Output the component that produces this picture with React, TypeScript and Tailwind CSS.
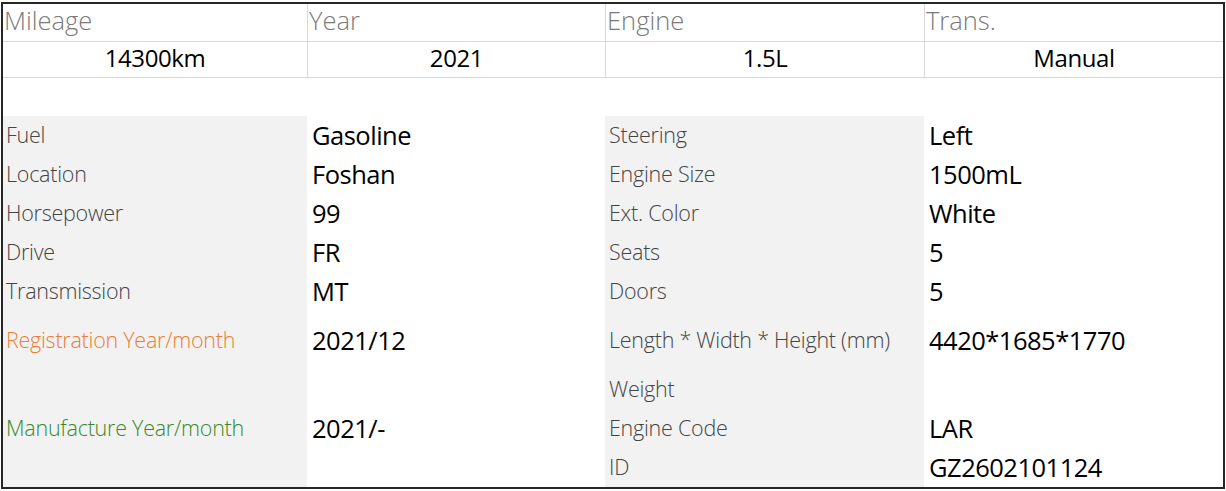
import React from 'react';

const font = { fontFamily: '"Open Sans", "Noto Sans", sans-serif' };

type Row = { label: string; value: string; h: string };

const topCols = [
  { head: 'Mileage', value: '14300km' },
  { head: 'Year', value: '2021' },
  { head: 'Engine', value: '1.5L' },
  { head: 'Trans.', value: 'Manual' },
];

const leftRows: Row[] = [
  { label: 'Fuel', value: 'Gasoline', h: 'h-[39px]' },
  { label: 'Location', value: 'Foshan', h: 'h-[39px]' },
  { label: 'Horsepower', value: '99', h: 'h-[39px]' },
  { label: 'Drive', value: 'FR', h: 'h-[39px]' },
  { label: 'Transmission', value: 'MT', h: 'h-[39px]' },
];

const rightRows: Row[] = [
  { label: 'Steering', value: 'Left', h: 'h-[39px]' },
  { label: 'Engine Size', value: '1500mL', h: 'h-[39px]' },
  { label: 'Ext. Color', value: 'White', h: 'h-[39px]' },
  { label: 'Seats', value: '5', h: 'h-[39px]' },
  { label: 'Doors', value: '5', h: 'h-[39px]' },
  { label: 'Length * Width * Height (mm)', value: '4420*1685*1770', h: 'h-[59px]' },
  { label: 'Weight', value: '', h: 'h-[39px]' },
  { label: 'Engine Code', value: 'LAR', h: 'h-[39px]' },
  { label: 'ID', value: 'GZ2602101124', h: 'h-[39px]' },
];

const Label = ({ children, color = 'text-[#444444]' }: { children: React.ReactNode; color?: string }) => (
  <span className={`text-[21.5px] font-[350] tracking-[-0.25px] ${color}`}>{children}</span>
);

const Value = ({ children }: { children: React.ReactNode }) => (
  <span className="text-[25.5px] text-black tracking-[-0.5px]">{children}</span>
);

export default function App() {
  return (
    <div className="bg-white w-[1226px] h-[491px] pt-[2px] pl-[1px]" style={font}>
      <div className="w-[1224px] h-[487px] border-2 border-[#262626] flex flex-col">
        {/* summary header */}
        <div className="grid grid-cols-[305px_298px_319px_1fr]">
          {topCols.map((c, i) => (
            <div key={c.head} className={`h-[38px] flex items-center pl-[1px] pb-[5px] border-b border-[#d9d9d9] ${i < 3 ? 'border-r' : ''}`}>
              <span className="text-[25.5px] font-light text-[#7a7a7a]">{c.head}</span>
            </div>
          ))}
          {topCols.map((c, i) => (
            <div key={c.value} className={`h-[36px] flex items-center justify-center pb-[3px] border-b border-[#d9d9d9] ${i < 3 ? 'border-r' : ''}`}>
              <span className="text-[24px] text-black tracking-[-0.4px]">{c.value}</span>
            </div>
          ))}
        </div>

        <div className="h-[38px]" />

        {/* detail table */}
        <div className="flex flex-1">
          <div className="w-[304px] bg-[#f2f2f2] flex flex-col">
            {leftRows.map(r => (
              <div key={r.label} className={`${r.h} flex items-center pl-[3px]`}>
                <Label>{r.label}</Label>
              </div>
            ))}
            <div className="h-[59px] flex items-center pl-[3px]">
              <Label color="text-[#ed7d31]">Registration Year/month</Label>
            </div>
            <div className="flex-1 flex items-center pl-[3px]">
              <Label color="text-[#378a28]">Manufacture Year/month</Label>
            </div>
          </div>
          <div className="w-[298px] flex flex-col">
            {leftRows.map(r => (
              <div key={r.label} className={`${r.h} flex items-center pl-[5px]`}>
                <Value>{r.value}</Value>
              </div>
            ))}
            <div className="h-[59px] flex items-center pl-[5px]">
              <Value>2021/12</Value>
            </div>
            <div className="flex-1 flex items-center pl-[5px]">
              <Value>2021/-</Value>
            </div>
          </div>
          <div className="w-[319px] bg-[#f2f2f2] flex flex-col">
            {rightRows.map(r => (
              <div key={r.label} className={`${r.h} flex items-center pl-[4px]`}>
                <Label>{r.label}</Label>
              </div>
            ))}
          </div>
          <div className="flex-1 flex flex-col">
            {rightRows.map(r => (
              <div key={r.label} className={`${r.h} flex items-center pl-[5px]`}>
                <Value>{r.value}</Value>
              </div>
            ))}
          </div>
        </div>
      </div>
    </div>
  );
}
